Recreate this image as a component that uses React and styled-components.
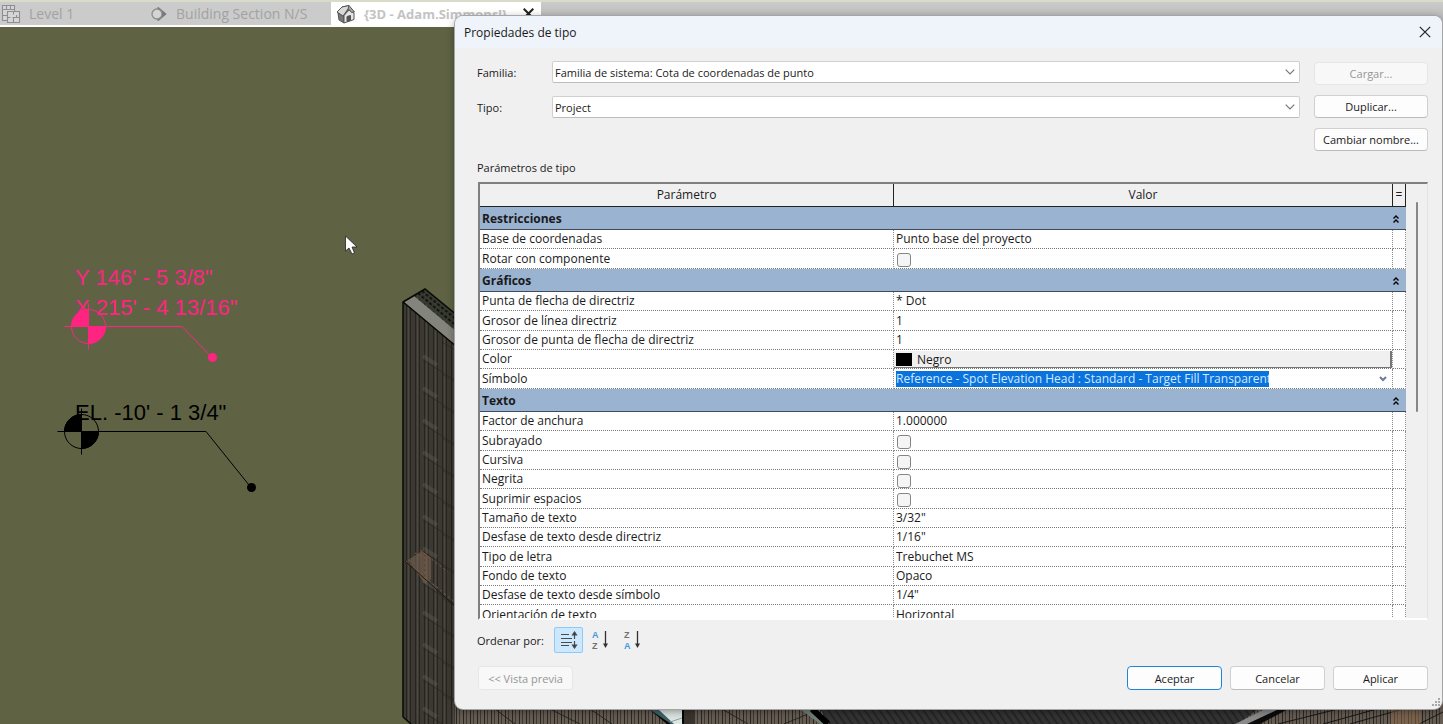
import React from "react";
import styled, { createGlobalStyle, css } from "styled-components";

const Global = createGlobalStyle`
  *, *::before, *::after { box-sizing: border-box; }
  body { margin: 0; background: #5f6344; }
  body, button, input, select { font-family: "Open Sans", "Noto Sans", sans-serif; font-size: 12px; color: #1a1a1a; }
`;

/* ---------- workspace behind the dialog ---------- */

const Workspace = styled.main`
  position: relative;
  display: flex;
  flex-direction: column;
  min-height: 100vh;
  overflow: hidden;
  background: #5f6344;
`;

const TabBar = styled.nav`
  position: relative;
  display: flex;
  align-items: stretch;
  height: 27px;
  background: linear-gradient(#cbcbcb, #b4b4b4);
  border-top: 2px solid #d8dccb;
  border-bottom: 2px solid #fdfdfd;
`;

const Tab = styled.button`
  display: flex;
  align-items: center;
  gap: 8px;
  flex: none;
  width: ${(p) => p.$width}px;
  padding: 0 0 0 ${(p) => (p.$active ? 5 : 1)}px;
  border: 0;
  background: ${(p) => (p.$active ? "#fff" : "#cbcbcb")};
  color: ${(p) => (p.$active ? "#c3c3c3" : "#a2a2a2")};
  font-size: ${(p) => (p.$active ? 13 : 14)}px;
  font-weight: ${(p) => (p.$active ? 700 : 400)};
  white-space: nowrap;
  svg { flex: none; }
  svg + svg { margin-left: 8px; }
`;

const Drawing = styled.svg`
  position: absolute;
  inset: 0;
  width: 100%;
  height: 100%;
  font-family: "Liberation Sans Narrow", "Liberation Sans", sans-serif;
  font-size: 22px;
`;

/* ---------- dialog ---------- */

const Dialog = styled.section`
  position: absolute;
  top: 16px;
  right: 1px;
  bottom: 15px;
  left: 455px;
  display: flex;
  flex-direction: column;
  overflow: hidden;
  border-radius: 8px;
  background: #f0f0f0;
  box-shadow: 0 0 0 1px #a5a5a5, 0 2px 8px rgba(0, 0, 0, 0.4);
`;

const TitleBar = styled.header`
  display: flex;
  align-items: center;
  justify-content: space-between;
  flex: none;
  height: 32px;
  padding: 0 10px 0 9px;
  background: #eef4f9;
`;

const Title = styled.h1`
  margin: 0;
  font-size: 12px;
  font-weight: 400;
`;

const IconButton = styled.button`
  display: grid;
  place-items: center;
  width: 14px;
  height: 16px;
  padding: 0;
  border: 0;
  background: none;
`;

const Body = styled.div`
  display: flex;
  flex-direction: column;
  flex: 1;
  min-height: 0;
  padding: 13px 14px 19px 22px;
`;

const Form = styled.div`
  display: flex;
  gap: 14px;
`;

const Fields = styled.div`
  display: flex;
  flex-direction: column;
  flex: 1;
  gap: 13px;
`;

const Field = styled.div`
  display: flex;
  align-items: center;
  height: 22px;
`;

const FieldLabel = styled.label`
  flex: none;
  width: 75px;
  font-size: 11px;
`;

const SelectBox = styled.div`
  display: flex;
  align-items: center;
  flex: 1;
  height: 22px;
  border: 1px solid #d0d0d0;
  border-bottom-color: #bdbdbd;
  border-radius: 2px;
  background: #fff;
  padding-right: 4px;
`;

const Select = styled.select`
  appearance: none;
  flex: 1;
  height: 20px;
  padding: 0 2px;
  border: 0;
  background: none;
  font-size: 11px;
`;

const Actions = styled.div`
  display: flex;
  flex-direction: column;
  gap: 10px;
  width: 114px;
  padding-top: 1px;
`;

const Button = styled.button`
  width: ${(p) => (p.$width ? `${p.$width}px` : "100%")};
  height: ${(p) => (p.$width ? 24 : 23)}px;
  padding: 0;
  border: 1px solid #d0d0d0;
  border-bottom-color: #bcbcbc;
  border-radius: 4px;
  background: #fdfdfd;
  font-size: 11px;
  white-space: nowrap;
  ${(p) => p.$primary && css`border-color: #1f86d6;`}
  &:disabled {
    border-color: #e6e6e6;
    background: #f8f8f8;
    color: #969696;
  }
`;

const Caption = styled.h2`
  margin: 9px 0 6px;
  font-size: 11px;
  font-weight: 400;
  line-height: 16px;
`;

const Panel = styled.div`
  display: flex;
  flex: 1;
  min-height: 0;
  overflow: hidden;
  border: 2px solid #808080;
  border-right: 1px solid #e2e2e2;
  border-bottom: 2px solid #fff;
  margin-left: 1px;
`;

const TableArea = styled.div`
  flex: 1;
  overflow: hidden;
  background: #fff;
`;

const Gutter = styled.div`
  width: 21px;
  padding: 18px 9px 0 10px;
  background: #f0f0f0;
`;

const Thumb = styled.div`
  height: 210px;
  background: #868686;
  border-radius: 1px;
`;

const Table = styled.table`
  width: 100%;
  table-layout: fixed;
  border-collapse: separate;
  border-spacing: 0;
`;

const HeadCell = styled.th`
  height: 23px;
  padding: 0;
  border-right: 1px solid #222;
  border-bottom: 1px solid #222;
  background: #f0f0f0;
  font-weight: 400;
  line-height: 16px;
`;

const GroupCell = styled.th`
  height: 23px;
  padding: 2px 2px 0;
  border-bottom: 1px solid #3f4c60;
  background: #9ab3d1;
  text-align: left;
  font-weight: 700;
  line-height: 16px;
`;

const GroupRow = styled.div`
  display: flex;
  align-items: center;
  justify-content: space-between;
  padding-right: 4px;
`;

const Row = styled.tr`
  height: 19px;
  &:nth-child(3n) { height: 20px; }
`;

const Cell = styled.td`
  padding: ${(p) => (p.$flush ? "1px 0 0" : "0 0 0 2px")};
  border-right: 1px dotted #8a8a8a;
  border-bottom: 1px dotted #7a7a7a;
  line-height: 16px;
  text-align: left;
  vertical-align: middle;
  white-space: nowrap;
`;

const NameCell = styled(Cell).attrs({ as: "th", scope: "row" })`
  font-weight: 400;
`;

const ValueInput = styled.input`
  display: block;
  width: 100%;
  height: 16px;
  padding: 0;
  border: 0;
  background: none;
  line-height: 16px;
`;

const Check = styled.input.attrs({ type: "checkbox" })`
  appearance: none;
  display: block;
  width: 14px;
  height: 14px;
  margin: 3px 0 0 1px;
  border: 1px solid #858585;
  border-radius: 3px;
  background: #f5f5f5;
`;

const ColorButton = styled.button`
  display: flex;
  align-items: center;
  gap: 5px;
  width: 100%;
  height: 17px;
  padding: 1px 0 0 2px;
  border: 0;
  border-right: 2px solid #767676;
  border-bottom: 1px solid #767676;
  background: #f0f0f0;
  line-height: 16px;
`;

const Swatch = styled.span`
  width: 16px;
  height: 13px;
  background: #000;
`;

const Combo = styled.div`
  display: flex;
  align-items: center;
  justify-content: space-between;
  padding-right: 2px;
`;

const SelectedInput = styled(ValueInput)`
  width: 373px;
  background: #0a72dc;
  color: #d3e9ff;
`;

const SortRow = styled.div`
  display: flex;
  align-items: center;
  gap: 3px;
  margin-top: 7px;
`;

const SortLabel = styled.span`
  width: 74px;
  font-size: 11px;
`;

const SortButton = styled.button`
  display: grid;
  place-items: center;
  width: 29px;
  height: 26px;
  padding: 0;
  border: 1px solid ${(p) => (p.$active ? "#90c8f6" : "transparent")};
  border-radius: 2px;
  background: ${(p) => (p.$active ? "#cce8ff" : "none")};
`;

const Footer = styled.footer`
  display: flex;
  gap: 8px;
  margin: 13px 0 0 1px;
`;

const Spacer = styled.div`
  flex: 1;
`;

const Grip = styled.svg`
  position: absolute;
  right: 2px;
  bottom: 2px;
`;

/* ---------- icons ---------- */

const Chevron = () => (
  <svg width="10" height="6" viewBox="0 0 10 6" fill="none" stroke="#777" strokeWidth="1.2">
    <path d="M.7.7 5 5 9.300.7" />
  </svg>
);

const Collapse = () => (
  <svg width="8" height="10" viewBox="0 0 8 10" fill="none" stroke="#000" strokeWidth="1.4">
    <path d="M1.500 4.500 4 2 6.500 4.500M1.500 8.500 4 6 6.500 8.500" />
  </svg>
);

const PlanIcon = () => (
  <svg width="20" height="20" viewBox="0 0 20 20" fill="#d6d6d6" stroke="#8f8f93" strokeWidth="1.1">
    <path d="M1.500 1.500h12v15h-12zM1.500 5.500h12M5.500 1.500v4M9.500 1.500v4M1.500 11.500h5" />
    <path d="M6.500 7.500h12v11h-12zM6.500 13.500h3m2 0h7M12.500 7.500v3m0 3v5M15.500 11v3" />
  </svg>
);

const SectionIcon = () => (
  <svg width="18" height="18" viewBox="0 0 18 18">
    <path d="M7 2 16 9 7 16 10 9z" fill="#77797a" />
    <path d="M8 2.500 15.500 9 8 15.500" fill="none" stroke="#77797a" strokeWidth="1.500" />
    <circle cx="7" cy="9" r="5" fill="#d4d4d4" stroke="#8b8d8e" strokeWidth="1.300" />
  </svg>
);

const HouseIcon = () => (
  <svg width="20" height="20" viewBox="0 0 20 20" stroke="#555" strokeLinejoin="round">
    <path d="M2 9 8 12v7l-5-3z" fill="#777" />
    <path d="M8 11.500 13 6l5 3v6.500L8 19z" fill="#e5e5e5" />
    <path d="M1 8 6 3l7-1.500 5.500 6.500-3 .5-3-3.500-5 7z" fill="#a5a5a5" />
    <path d="M6 3 13 1.500 12 5l-5 7-6-4z" fill="#d9d9d9" />
    <path d="M11 12.500 14.500 11.500v5L11 17.500z" fill="#555" />
  </svg>
);

const CloseIcon = ({ size, weight }) => (
  <svg width={size} height={size} viewBox="0 0 12 12" stroke="#222" strokeWidth={weight}>
    <path d="m.8.8 10.400 10.400M11.200.8.8 11.200" />
  </svg>
);

const SortDefaultIcon = () => (
  <svg width="18" height="18" viewBox="0 0 18 18" stroke="#4a4a4a" strokeWidth="1.200">
    <path d="M1 3.500h8M1 7.500h11M1 11.500h11M1 14.500h8" />
    <path d="M14.500 1v7M14.500 10v7" />
    <path d="m12.500 4 2-3 2 3zM12.500 14l2 3 2-3z" fill="#333" />
  </svg>
);

const SortLetters = styled.svg`
  font-family: "Liberation Sans", sans-serif;
  font-size: 9px;
  font-weight: 700;
`;

const SortAlphaIcon = ({ top, bottom }) => {
  const tone = (c) => (c === "A" ? "#3b9ae0" : "#707070");
  return (
    <SortLetters width="20" height="20" viewBox="0 0 20 20">
      <text x="1" y="8" fill={tone(top)}>{top}</text>
      <text x="1" y="19" fill={tone(bottom)}>{bottom}</text>
      <path d="M14.500 1v14" stroke="#333" strokeWidth="1.300" />
      <path d="m12 13.500 2.500 4.500 2.500-4.500z" fill="#333" />
    </SortLetters>
  );
};

/* ---------- model drawing ---------- */

const Target = ({ x, y, color }) => (
  <g stroke={color} fill="none">
    <circle cx={x} cy={y} r="17" />
    <path d={`M${x - 24} ${y}h48M${x} ${y - 23}v46`} />
    <path d={`M${x} ${y}h-17a17 17 0 0 1 17-17zM${x} ${y}h17a17 17 0 0 1-17 17z`} fill={color} />
  </g>
);

const ribs = Array.from({ length: 12 }, (_, i) => 322 + i * 32);

const Model = () => (
  <Drawing viewBox="0 0 1443 724" preserveAspectRatio="xMinYMin slice" aria-hidden="true">
    <defs>
      <pattern id="wall" width="9" height="8" patternUnits="userSpaceOnUse">
        <rect width="9" height="8" fill="#3b3931" />
        <path d="M1.500 0v8M5.500 0v8" stroke="#25241f" />
        <path d="M3.500 0v8" stroke="#4b4840" />
      </pattern>
      <pattern id="siding" width="7" height="8" patternUnits="userSpaceOnUse">
        <rect width="7" height="8" fill="#655c54" />
        <path d="M1.500 0v8" stroke="#292622" />
        <path d="M4.500 0v8" stroke="#40372f" />
      </pattern>
      <pattern id="roof" width="6" height="6" patternUnits="userSpaceOnUse" patternTransform="rotate(-35)">
        <rect width="6" height="6" fill="#333" />
        <path d="M1 0v6" stroke="#252525" strokeWidth="2" />
      </pattern>
    </defs>

    <path d="M403 302 425 289 475 333V724H411L403 717z" fill="url(#wall)" />
    <path d="m425 289 50 41v16l-59-50z" fill="#373a31" />
    <path d="m404 302 10-6 61 51v15z" fill="#83847b" />
    <path d="m418 293 57 49M422 291l53 44" stroke="#15150f" strokeWidth="2" strokeDasharray="3 2" fill="none" />
    <path d="M403 717V302l22-13 50 41M403 302l72 60M403 717l8 7" stroke="#090907" strokeWidth="1.500" fill="none" />
    {ribs.map((y) => (
      <g key={y} fill="none">
        <path d={`M423 ${y + 34}l14 9`} stroke="#5a5852" strokeWidth="4" opacity=".45" />
        <path d={`M423 ${y + 38}l32 20M442 ${y + 20}l13 8`} stroke="#24231f" opacity=".6" />
      </g>
    ))}
    <path d="m408 560 14-9 9 7v21l-6 5z" fill="#7f6656" opacity=".55" />
    <path d="m415 553 10 5v22M406 561l52 44M420 550l28 22" stroke="#8c5b43" strokeDasharray="2 3" fill="none" />
    <path d="m405 561 50 45" stroke="#1d1b17" />

    <path d="M455 700h375v24H455z" fill="url(#siding)" />
    <path d="m495 709 20 15m35-15 30 15m10-15 22 15m110-15 26 15m36 0 36-15" stroke="#28231e" fill="none" />
    <path d="M644 705h40v19h-17z" fill="#050505" />
    <path d="M649 709h13l21 15h-12z" fill="#3f6066" />
    <path d="M658 709h24v15h-8z" fill="#dbe5e2" />
    <path d="m682 718-12 4" stroke="#8da09e" />
    <path d="M684 709h11v15h-11z" fill="#39332d" />
    <path d="m800 709 14 0 18 15h-12z" fill="#708078" />
    <path d="M815 700h463l-38 24H829z" fill="url(#roof)" />
    <path d="m812 709 16 15" stroke="#000" strokeWidth="6" />
    <path d="M1270 700h173v24h-205z" fill="url(#siding)" />
    <path d="m1285 700-50 24h25l45-24z" fill="#0b0b0b" />
    <path d="m1269 707-34 17h12l36-17z" fill="#8a8a8a" />
    <path d="m1278 724 60-15m12 15 53-15m-80 15 54-15m42 15 24-12" stroke="#181614" fill="none" />
    <path d="M1391 709h30v15h-30z" fill="#8e6949" opacity=".5" />

    <g fill="#ff2382">
      <text x="75" y="285">Y 146' - 5 3/8"</text>
      <text x="75" y="315">X 215' - 4 13/16"</text>
      <circle cx="212.500" cy="357.500" r="4.500" />
    </g>
    <Target x={88.5} y={326.5} color="#ff2382" />
    <path d="M105 326.500h77l30 31" stroke="#ff2382" fill="none" />

    <text x="75" y="420">EL. -10' - 1 3/4"</text>
    <circle cx="251.500" cy="487.500" r="4.500" />
    <Target x={81.5} y={431.5} color="#000" />
    <path d="M98 431.500h108l45 56" stroke="#000" fill="none" />

    <path d="M345.500 236v15l3.500-3 3 6 2.500-1-2.500-6h5z" fill="#fff" stroke="#222" strokeWidth=".8" />
  </Drawing>
);

/* ---------- data ---------- */

const groups = [
  {
    name: "Restricciones",
    rows: [
      ["Base de coordenadas", "Punto base del proyecto"],
      ["Rotar con componente", "", "check"],
    ],
  },
  {
    name: "Gráficos",
    rows: [
      ["Punta de flecha de directriz", "* Dot"],
      ["Grosor de línea directriz", "1"],
      ["Grosor de punta de flecha de directriz", "1"],
      ["Color", "Negro", "color"],
      ["Símbolo", "Reference - Spot Elevation Head : Standard - Target Fill Transparent", "combo"],
    ],
  },
  {
    name: "Texto",
    rows: [
      ["Factor de anchura", "1.000000"],
      ["Subrayado", "", "check"],
      ["Cursiva", "", "check"],
      ["Negrita", "", "check"],
      ["Suprimir espacios", "", "check"],
      ["Tamaño de texto", '3/32"'],
      ["Desfase de texto desde directriz", '1/16"'],
      ["Tipo de letra", "Trebuchet MS"],
      ["Fondo de texto", "Opaco"],
      ["Desfase de texto desde símbolo", '1/4"'],
      ["Orientación de texto", "Horizontal"],
    ],
  },
];

function Value({ name, value, kind }) {
  if (kind === "check") return <Check aria-label={name} />;
  if (kind === "color") {
    return (
      <ColorButton type="button">
        <Swatch />
        {value}
      </ColorButton>
    );
  }
  if (kind === "combo") {
    return (
      <Combo>
        <SelectedInput aria-label={name} defaultValue={value} />
        <IconButton type="button" aria-label="Abrir lista">
          <svg width="8" height="6" viewBox="0 0 8 6" fill="none" stroke="#6c7a96" strokeWidth="2">
            <path d="m1 1 3 3 3-3" />
          </svg>
        </IconButton>
      </Combo>
    );
  }
  return <ValueInput aria-label={name} defaultValue={value} />;
}

export default function App() {
  return (
    <Workspace>
      <Global />
      <Model />
      <TabBar>
        <Tab type="button" $width={149}><PlanIcon />Level 1</Tab>
        <Tab type="button" $width={182}><SectionIcon />Building Section N/S</Tab>
        <Tab type="button" $width={210} $active>
          <HouseIcon />
          {"{3D - Adam.Simmons!}"}
          <CloseIcon size={11} weight={2.2} />
        </Tab>
      </TabBar>

      <Dialog role="dialog" aria-labelledby="dialog-title">
        <TitleBar>
          <Title id="dialog-title">Propiedades de tipo</Title>
          <IconButton type="button" aria-label="Cerrar"><CloseIcon size={12} weight={1.2} /></IconButton>
        </TitleBar>
        <Body>
          <Form>
            <Fields>
              <Field>
                <FieldLabel htmlFor="family">Familia:</FieldLabel>
                <SelectBox>
                  <Select id="family"><option>Familia de sistema: Cota de coordenadas de punto</option></Select>
                  <Chevron />
                </SelectBox>
              </Field>
              <Field>
                <FieldLabel htmlFor="type">Tipo:</FieldLabel>
                <SelectBox>
                  <Select id="type"><option>Project</option></Select>
                  <Chevron />
                </SelectBox>
              </Field>
            </Fields>
            <Actions>
              <Button type="button" disabled>Cargar...</Button>
              <Button type="button">Duplicar...</Button>
              <Button type="button">Cambiar nombre...</Button>
            </Actions>
          </Form>

          <Caption>Parámetros de tipo</Caption>
          <Panel>
            <TableArea>
              <Table>
                <colgroup>
                  <col width="414" />
                  <col />
                  <col width="13" />
                </colgroup>
                <thead>
                  <tr>
                    <HeadCell scope="col">Parámetro</HeadCell>
                    <HeadCell scope="col">Valor</HeadCell>
                    <HeadCell scope="col">=</HeadCell>
                  </tr>
                </thead>
                {groups.map((group) => (
                  <tbody key={group.name}>
                    <tr>
                      <GroupCell colSpan={3} scope="rowgroup">
                        <GroupRow>{group.name}<Collapse /></GroupRow>
                      </GroupCell>
                    </tr>
                    {group.rows.map(([name, value, kind]) => (
                      <Row key={name}>
                        <NameCell>{name}</NameCell>
                        <Cell $flush={kind === "color"}><Value name={name} value={value} kind={kind} /></Cell>
                        <Cell />
                      </Row>
                    ))}
                  </tbody>
                ))}
              </Table>
            </TableArea>
            <Gutter><Thumb /></Gutter>
          </Panel>

          <SortRow>
            <SortLabel>Ordenar por:</SortLabel>
            <SortButton type="button" $active aria-label="Orden predeterminado"><SortDefaultIcon /></SortButton>
            <SortButton type="button" aria-label="Orden ascendente"><SortAlphaIcon top="A" bottom="Z" /></SortButton>
            <SortButton type="button" aria-label="Orden descendente"><SortAlphaIcon top="Z" bottom="A" /></SortButton>
          </SortRow>

          <Footer>
            <Button type="button" $width={95} disabled>&lt;&lt; Vista previa</Button>
            <Spacer />
            <Button type="button" $width={95} $primary>Aceptar</Button>
            <Button type="button" $width={95}>Cancelar</Button>
            <Button type="button" $width={95}>Aplicar</Button>
          </Footer>
        </Body>
        <Grip width="9" height="9" viewBox="0 0 9 9" fill="#a8a8a8" aria-hidden="true">
          <path d="M7 0h2v2H7zM7 3h2v2H7zM4 3h2v2H4zM7 6h2v2H7zM4 6h2v2H4zM1 6h2v2H1z" />
        </Grip>
      </Dialog>
    </Workspace>
  );
}
